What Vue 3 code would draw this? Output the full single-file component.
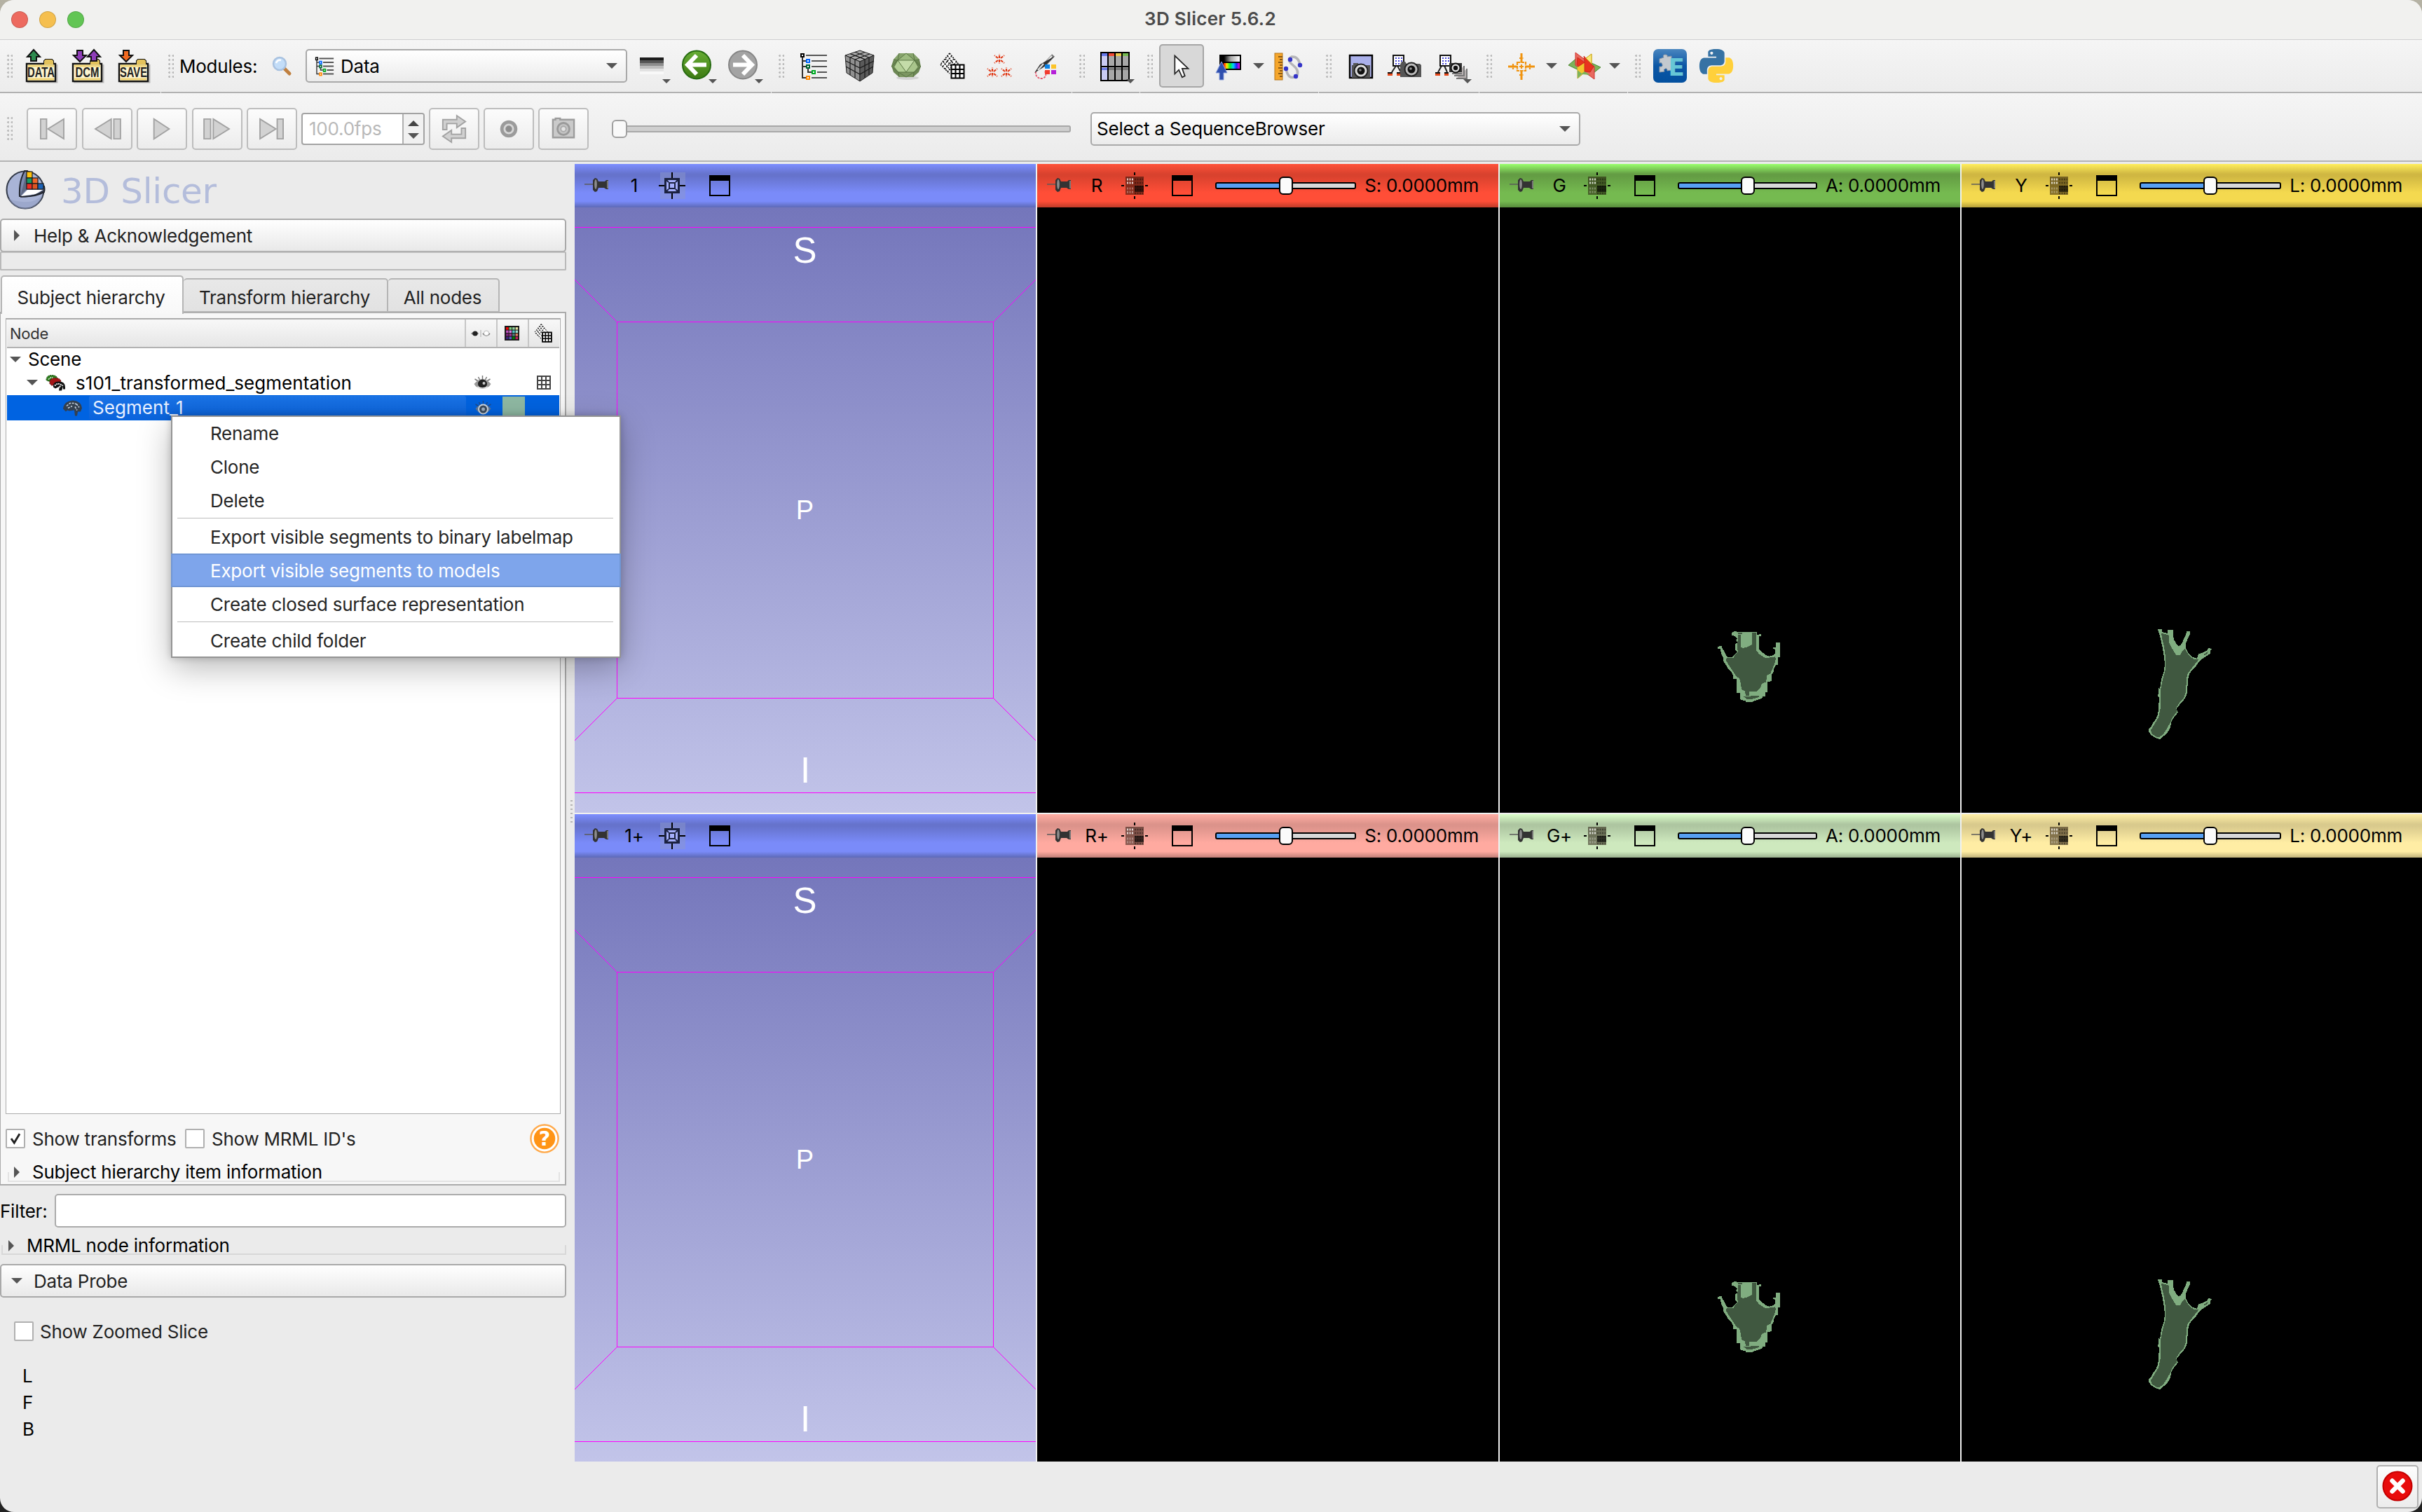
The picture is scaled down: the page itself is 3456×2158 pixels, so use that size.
<script setup>
const views = [
  { id: '1', kind: '3d', dy: 0, top: '#7d8eff', dark: '#6673cc', mid: '#7a8bf9', low: '#5d69b6' },
  { id: 'R', kind: 'slice', axis: 'S', top: '#ff5239', dark: '#d9422e', mid: '#ff4e37', low: '#bf3b29' },
  { id: 'G', kind: 'slice', axis: 'A', shape: 'g', top: '#9aff6d', dark: '#649d44', mid: '#75ba50', low: '#578b3c' },
  { id: 'Y', kind: 'slice', axis: 'L', shape: 'y', top: '#ffee5c', dark: '#d0b742', mid: '#f4d94f', low: '#b39e39' },
  { id: '1+', kind: '3d', dy: 2, top: '#7d8eff', dark: '#6673cc', mid: '#7a8bf9', low: '#5d69b6' },
  { id: 'R+', kind: 'slice', axis: 'S', top: '#ffaea4', dark: '#dc938b', mid: '#ffaaa0', low: '#c07f78' },
  { id: 'G+', kind: 'slice', axis: 'A', shape: 'g', top: '#dcffcb', dark: '#aec6a1', mid: '#cee9be', low: '#9ab08e' },
  { id: 'Y+', kind: 'slice', axis: 'L', shape: 'y', top: '#ffefa6', dark: '#d9ca8d', mid: '#ffeda4', low: '#c0b27a' }
]
const headStyle = (v) => ({
  background: `linear-gradient(to bottom, ${v.top} 0, ${v.dark} 23%, ${v.dark} 28%, ${v.mid} 66%, ${v.mid} 86%, ${v.low} 100%)`
})
const menu = [
  ['Rename', 'Clone', 'Delete'],
  ['Export visible segments to binary labelmap', 'Export visible segments to models', 'Create closed surface representation'],
  ['Create child folder']
]
const folders = [
  { t: 'DATA', len: 39, arrows: [{ x: 13, up: true, c: '#2e8b4f' }] },
  { t: 'DCM', len: 34, arrows: [{ x: 13, up: false, c: '#8e3db8' }, { x: 33, up: true, c: '#8e3db8' }] },
  { t: 'SAVE', len: 39, arrows: [{ x: 13, up: false, c: '#f26a21' }] }
]
const swatches = ['#f00', '#7ad27a', '#8fd0a0', '#e8e0a0', '#c050c0', '#d080e0', '#50c8c8', '#a0e0d0', '#802080', '#a03090', '#508080', '#e08060', '#402080', '#5060c0', '#008000', '#c02060']
const transport = ['first', 'prev', 'play', 'next', 'last']
</script>

<template>
  <div class="desktop">
    <div class="window">
      <header class="titlebar">
        <div class="lights"><i class="red"></i><i class="amber"></i><i class="green"></i></div>
        <div class="title">3D Slicer 5.6.2</div>
      </header>

      <div class="toolbar">
        <section style="width: 230px">
          <b class="grip"></b>
          <div v-for="f in folders" :key="f.t" class="cell">
            <svg viewBox="0 0 48 48" class="fold-ic">
              <path d="M4 47h42V22" fill="none" stroke="#999" stroke-width="3" opacity=".6" />
              <path d="M28 21v-4l2-2h9l2 2v4z" fill="#e3c25c" stroke="#111" stroke-width="2" />
              <rect x="3" y="21" width="41" height="25" fill="#fdf4cf" stroke="#111" stroke-width="2.400" />
              <path d="M5 24h37M5 43h37" stroke="#f0d477" stroke-width="3" />
              <path d="M28 21v-4l2-2h9l2 2v5H28z" fill="#e3c25c" />
              <text x="23.500" y="40" text-anchor="middle" :textLength="f.len" lengthAdjust="spacingAndGlyphs" class="ficon">{{ f.t }}</text>
              <g v-for="a in f.arrows" :key="a.x" :transform="`translate(${a.x} 0)`">
                <path :d="a.up ? 'M0 1l9 10h-5v6h-8v-6h-5z' : 'M0 18l9-9h-5V2h-8v7h-5z'" :fill="a.c" stroke="#111" stroke-width="2" />
              </g>
            </svg>
          </div>
        </section>

        <section style="width: 871px">
          <b class="grip"></b>
          <span class="modlabel">Modules:</span>
          <svg class="mag" viewBox="0 0 28 28">
            <path d="M17 17l8 8" stroke="#c08040" stroke-width="5" stroke-linecap="round" />
            <circle cx="11" cy="11" r="9" fill="#c3ddf8" stroke="#a9c2e0" stroke-width="2.500" />
            <path d="M6 10q2-5 7-4" stroke="#fff" stroke-width="2.500" fill="none" />
          </svg>
          <div class="combo modcombo">
            <svg class="hier-s" viewBox="4 4 40 42">
              <path d="M8 12v29h5M8 17h5M16 28v5h5M8 25h5" fill="none" stroke="#333" stroke-width="2" />
              <path d="M13 9h30M21 17h22M21 25h22M29 33h14M21 41h22" stroke="#555" stroke-width="3" />
              <rect x="6" y="7" width="4" height="5" fill="#fff" stroke="#000" stroke-width="2" />
              <rect x="14" y="15" width="4" height="5" fill="#fff" stroke="#06f" stroke-width="2.400" />
              <rect x="14" y="23" width="4" height="5" fill="#fff" stroke="#063" stroke-width="2.400" />
              <rect x="22" y="31" width="4" height="5" fill="#fff" stroke="#0a2" stroke-width="2.400" />
              <rect x="14" y="39" width="4" height="5" fill="#fff" stroke="#f80" stroke-width="2.400" />
            </svg>
            <span>Data</span>
            <i class="tri end"></i>
          </div>
          <div class="cell">
            <svg viewBox="0 0 48 48" shape-rendering="crispEdges">
              <rect x="9" y="12" width="34" height="4" fill="#1d1d1d" />
              <rect x="9" y="16" width="34" height="4" fill="#555" />
              <rect x="9" y="20" width="34" height="4" fill="#8d8d8d" />
              <rect x="9" y="24" width="34" height="4" fill="#bcbcbc" />
              <rect x="9" y="28" width="34" height="4" fill="#e2e2e2" />
              <rect x="9" y="32" width="34" height="4" fill="#f8f8f8" />
            </svg>
            <i class="tri mini"></i>
          </div>
          <div class="cell">
            <svg viewBox="0 0 48 48">
              <defs>
                <linearGradient id="gg" x1="0" y1="0" x2="0" y2="1"><stop offset="0" stop-color="#67ad35" /><stop offset="1" stop-color="#3d7a12" /></linearGradient>
              </defs>
              <circle cx="24" cy="22.500" r="20" fill="url(#gg)" stroke="#256a10" stroke-width="2" />
              <path d="M24 9L11 22.500 24 36M12 22.500h26" fill="none" stroke="#fff" stroke-width="6" />
            </svg>
            <i class="tri mini"></i>
          </div>
          <div class="cell">
            <svg viewBox="0 0 48 48">
              <circle cx="24" cy="22.500" r="20" fill="#a3a3a3" stroke="#858585" stroke-width="2" />
              <path d="M24 9l13 13.500L24 36M36 22.500H10" fill="none" stroke="#fff" stroke-width="6" />
            </svg>
            <i class="tri mini"></i>
          </div>
        </section>

        <section style="width: 429px">
          <b class="grip"></b>
          <div class="cell">
            <svg viewBox="0 0 48 48" shape-rendering="crispEdges">
              <path d="M8 12v29h5M8 17h5M16 28v5h5M8 25h5" fill="none" stroke="#333" stroke-width="1.500" />
              <path d="M13 9h30M21 17h22M21 25h22M29 33h14M21 41h22" stroke="#555" stroke-width="2" />
              <rect x="6" y="7" width="4" height="4" fill="#fff" stroke="#000" stroke-width="2" />
              <rect x="14" y="15" width="4" height="4" fill="#fff" stroke="#06f" stroke-width="2" />
              <rect x="14" y="23" width="4" height="4" fill="#fff" stroke="#063" stroke-width="2" />
              <rect x="22" y="31" width="4" height="4" fill="#fff" stroke="#0a2" stroke-width="2" />
              <rect x="14" y="39" width="4" height="4" fill="#fff" stroke="#f80" stroke-width="2" />
            </svg>
          </div>
          <div class="cell">
            <svg viewBox="0 0 48 48">
              <path d="M24 2l20 7-20 9L3 9z" fill="#a9a9a9" stroke="#222" />
              <path d="M3 9l21 9v28L5 34z" fill="#909090" stroke="#222" />
              <path d="M44 9l-20 9v28l18-12z" fill="#5a5a5a" stroke="#222" />
              <path d="M10 6.600l21 8M17 4.300l20 8M38 7L17 15M31 4.500L10 12M10 12v25M17 15v26M31 15v26M37 12v25M4 17l20 10 20-10M4 25l20 11 19-11" fill="none" stroke="#1a1a1a" stroke-width="1.200" />
            </svg>
          </div>
          <div class="cell">
            <svg viewBox="0 0 48 48">
              <ellipse cx="26" cy="41" rx="16" ry="3" fill="#d4d4d4" />
              <path d="M14 6h20l9 9 2 10-3 8-8 7H14l-8-7-3-9 3-9z" fill="#6c8754" />
              <path d="M14 6h20l9 9-7 1-12-10-12 10-6-1z" fill="#86a36b" />
              <path d="M24 6l12 10H12z" fill="#9dbb80" />
              <path d="M12 16h24l5 9-6 8H13l-6-8z" fill="#a9c58c" />
              <path d="M12 16h24L24 32z" fill="#c4dca9" />
              <path d="M12 16l12 16H13l-6-7z" fill="#b3cf96" />
              <path d="M13 33h22l-1 7H14z" fill="#7c9662" />
              <path d="M14 6L12 16 3 25l10 8 1 7M34 6l2 10 9 9-10 8-1 7M24 6L12 16h24L24 6M6 15l6 1M43 15l-7 1M12 16l12 17 12-17M13 33h22M13 33l11 7 11-7M7 25l5-9M41 25l-5-9" fill="none" stroke="#55703f" stroke-width=".9" />
            </svg>
          </div>
          <div class="cell">
            <svg viewBox="0 0 48 48">
              <path d="M20 6l13 16H22v12L7 22z" fill="#fff" />
              <path d="M20 6l13 16M17 10l9 12M14 14l8 10M11 18l10 12M7 22l13 13M20 6L7 22M23 10L10 25M26 14L13 29M30 18L17 32" stroke="#111" stroke-width="1.600" stroke-dasharray="2 1.500" fill="none" />
              <path d="M22.500 22.500h18v19h-18zM22 29h19M22 35h19" fill="#fff" stroke="#000" stroke-width="2" />
              <path d="M28.500 22v20M34.500 22v20" stroke="#000" stroke-width="2" />
            </svg>
          </div>
          <div class="cell">
            <svg viewBox="0 0 48 48" fill="none" stroke="#e03a17" stroke-width="2.200" stroke-dasharray="4 1.500">
              <g v-for="p in [[25, 14], [15, 33], [35, 33]]" :key="p[0]" :transform="`translate(${p[0]} ${p[1]})`">
                <path d="M0-1v-6M0 1v6M2-1l5-4M-2-1l-5-4M2 2l5 4M-2 2l-5 4" />
              </g>
            </svg>
          </div>
          <div class="cell">
            <svg viewBox="0 0 48 48">
              <path d="M11 32q-1 10 9 10 8-2 4-10" fill="none" stroke="#e8526a" stroke-width="1.800" stroke-dasharray="3 1.500" />
              <path d="M36 9L22 24" stroke="#777" stroke-width="5" />
              <path d="M34 10L21 24" stroke="#eee" stroke-width="2" />
              <path d="M38 10L22 26 9 34l8-12" fill="#333" />
              <path d="M22 21l-8 9" stroke="#ddd" stroke-width="2.500" />
              <rect x="24" y="22" width="7" height="6" fill="#0b82e6" /><rect x="33" y="22" width="7" height="6" fill="#fcc42a" />
              <rect x="24" y="30" width="7" height="6" fill="#f23b2f" /><rect x="33" y="30" width="7" height="6" fill="#b51fd8" />
            </svg>
          </div>
        </section>

        <section style="width: 97px">
          <b class="grip"></b>
          <div class="cell">
            <svg viewBox="0 0 48 48" shape-rendering="crispEdges">
              <rect x="4" y="4" width="42" height="42" fill="#a8a8a8" />
              <rect x="4" y="4" width="11" height="42" fill="#c9cbf2" />
              <path d="M6 8h8" stroke="#6678e8" stroke-width="4" /><path d="M16 8h8" stroke="#f04a35" stroke-width="4" />
              <path d="M26 8h8" stroke="#ecc94b" stroke-width="4" /><path d="M36 8h8" stroke="#74b950" stroke-width="4" />
              <path d="M6 28h8" stroke="#6678e8" stroke-width="3" /><path d="M16 28h28" stroke="#777" stroke-width="3" />
              <path d="M5 5h40v40H5zM15 4v42M25 4v42M35 4v42M4 25h42" fill="none" stroke="#000" stroke-width="2" />
            </svg>
            <i class="tri mini"></i>
          </div>
        </section>

        <section style="width: 255px">
          <b class="grip"></b>
          <div class="pressed">
            <svg viewBox="0 0 48 48">
              <path d="M16 9v27l6-6 5 11 4-2-4-11h9z" fill="#fff" stroke="#222" stroke-width="1.800" />
            </svg>
          </div>
          <div class="cell">
            <svg viewBox="0 0 48 48">
              <defs>
                <linearGradient id="gw"><stop offset=".2" stop-color="#000" /><stop offset=".55" stop-color="#aaa" /><stop offset="1" stop-color="#fff" /></linearGradient>
                <linearGradient id="gr"><stop offset="0" stop-color="#f00" /><stop offset=".2" stop-color="#fe0" /><stop offset=".4" stop-color="#0e3" /><stop offset=".6" stop-color="#0cf" /><stop offset=".8" stop-color="#22f" /><stop offset="1" stop-color="#f0c" /></linearGradient>
              </defs>
              <rect x="11" y="8" width="31" height="22" />
              <rect x="12" y="10" width="28" height="8" fill="url(#gw)" /><rect x="17" y="20" width="23" height="8" fill="url(#gr)" />
              <path d="M14 18l8 16h-5v10h-6V34H6z" fill="#2f4fae" stroke="#8ea2dc" />
            </svg>
          </div>
          <i class="tri drop"></i>
          <div class="cell">
            <svg viewBox="0 0 48 48">
              <rect x="4" y="6" width="11" height="38" fill="#f5a62c" stroke="#b5761a" />
              <path d="M9 11h6M11 15h4M9 19h6M11 23h4M9 27h6M11 31h4M9 35h6M11 39h4" stroke="#6b430c" stroke-width="1.600" />
              <path d="M40 23q-2-13-12-12-8 4 2 12 10 8 5 16-12 6-15-11" fill="none" stroke="#b5b5b9" stroke-width="3.500" />
              <circle cx="26" cy="15" r="3.200" fill="#3434c8" /><circle cx="40" cy="23" r="3.200" fill="#3434c8" />
              <circle cx="20" cy="28" r="3.200" fill="#3434c8" /><circle cx="34" cy="39" r="3.200" fill="#3434c8" />
            </svg>
          </div>
        </section>

        <section style="width: 229px">
          <b class="grip"></b>
          <div class="cell">
            <svg viewBox="0 0 48 48">
              <rect x="8" y="9" width="32" height="32" fill="#aab0ea" stroke="#000" stroke-width="2.400" />
              <path d="M13 20h7v3h17v18H11V23h2z" fill="#555" />
              <circle cx="24" cy="31" r="9.500" fill="#ddd" stroke="#222" stroke-width="2" /><circle cx="24" cy="31" r="5.500" fill="#111" /><circle cx="23" cy="30" r="1.800" fill="#888" />
            </svg>
          </div>
          <div class="cell">
            <svg viewBox="0 0 48 48">
              <path d="M8 24L2 33M10 24l5 9" stroke="#222" stroke-width="2" />
              <path d="M-4 34h7M9 34h7" stroke="#111" stroke-width="2" /><path d="M-4 36.500h7M9 36.500h7" stroke="#e3481b" stroke-width="3" />
              <rect x="4" y="9" width="15" height="15" fill="#fff" stroke="#111" stroke-width="2" />
              <path d="M7 13h2M11 13h2M15 13h2M7 17h2M11 17h2M15 17h2M7 21h2M11 21h2" stroke="#4747d8" stroke-width="2" />
              <path d="M16 18h5l2 3h19l2 2v17H14V22z" fill="#555" />
              <circle cx="30" cy="29" r="9.500" fill="#bbb" stroke="#222" stroke-width="2" /><circle cx="30" cy="29" r="5.500" fill="#111" /><circle cx="29" cy="28" r="1.800" fill="#999" />
            </svg>
          </div>
          <div class="cell">
            <svg viewBox="0 0 48 48">
              <path d="M7 24L2 33M11 24l4 9" stroke="#222" stroke-width="2" />
              <path d="M-2 34h7M11 34h6" stroke="#111" stroke-width="2" /><path d="M-2 36.500h7M11 36.500h6" stroke="#e3481b" stroke-width="3" />
              <path d="M28 42h15V28M25 38h14V24M22 35h14" stroke="#777" stroke-width="2" fill="#b9b2b2" />
              <rect x="5" y="9" width="15" height="15" fill="#fff" stroke="#111" stroke-width="2" />
              <path d="M8 13h2M12 13h2M16 13h2M8 17h2M12 17h2M16 17h2M8 21h2M12 21h2" stroke="#4747d8" stroke-width="2" />
              <rect x="18" y="20" width="18" height="13" fill="#333" />
              <circle cx="27" cy="27" r="6.500" fill="#ddd" stroke="#111" stroke-width="2" /><circle cx="27" cy="27" r="3.200" fill="#111" />
            </svg>
            <i class="tri mini m3"></i>
          </div>
        </section>

        <section style="width: 212px">
          <b class="grip"></b>
          <div class="cell">
            <svg viewBox="0 0 48 48" stroke="#f0930f" fill="none">
              <path d="M24 6v13M24 31v13M5 25h12M31 25h12" stroke-width="3" />
              <path d="M18 19h12v12H18zM21 13h6M21 37h6M12 21v8M36 21v8" stroke-width="2.200" stroke-dasharray="4.500 1" />
              <path d="M24 22v6M21 25h6" stroke-width="2.200" />
            </svg>
          </div>
          <i class="tri drop"></i>
          <div class="cell narrow">
            <svg viewBox="0 0 48 48">
              <path d="M1 23l14-12 32 15-15 12z" fill="#7db35a" stroke="#4e8a35" />
              <path d="M34 7L14 23v19l20-17z" fill="#f7ea7c" stroke="#cfa91e" />
              <path d="M11 5l27 20v18L11 23z" fill="#e86a5f" stroke="#d2302c" />
              <path d="M14 25l18 12-12-1-6 6z" fill="#7db35a" />
              <path d="M14 26l10-7v13l-4 3-6-5z" fill="#f2c62e" />
              <path d="M14 12l10 7-9 6-2-3zM23 10l14 15-5 8-8-1V18z" fill="#e8331f" stroke="#c42318" stroke-width=".8" />
              <path d="M26 13l8-6v14z" fill="#f7ea7c" stroke="#cfa91e" />
            </svg>
          </div>
          <i class="tri drop"></i>
        </section>

        <section class="rest">
          <b class="grip"></b>
          <div class="cell">
            <svg viewBox="0 0 48 48">
              <defs><linearGradient id="ge" x1="0" y1="0" x2="0" y2="1"><stop offset="0" stop-color="#4a86bf" /><stop offset=".5" stop-color="#0b56a5" /><stop offset="1" stop-color="#03509f" /></linearGradient></defs>
              <rect width="48" height="48" rx="7" fill="url(#ge)" />
              <path d="M9 14l6-2q-2-4 2-4t3 3l6-1v6q5-2 5 2t-5 3v9l-6 1q0-4-3-3t-1 4l-7 1v-8q5 1 4-3t-4-2z" fill="#c3c9cf" stroke="#8b97a5" />
              <text x="33" y="38" text-anchor="middle" class="ext-e">E</text>
            </svg>
          </div>
          <div class="cell">
            <svg viewBox="0 0 24 24">
              <path fill="#3672a4" d="M14.250.18l.9.2.73.26.59.3.45.32.34.34.25.34.16.33.1.3.04.26.02.2-.01.13V8.500l-.05.63-.13.55-.21.46-.26.38-.3.31-.33.25-.35.19-.35.14-.33.1-.3.07-.26.04-.21.02H8.770l-.69.05-.59.14-.5.22-.41.27-.33.32-.27.35-.2.36-.15.37-.1.35-.07.32-.04.27-.02.21v3.060H3.170l-.21-.03-.28-.07-.32-.12-.35-.18-.36-.26-.36-.36-.35-.46-.32-.59-.28-.73-.21-.88-.14-1.050-.05-1.230.06-1.220.16-1.040.24-.87.32-.71.36-.57.4-.44.42-.33.42-.24.4-.16.36-.1.32-.05.24-.01h.16l.06.01h8.160v-.83H6.180l-.01-2.750-.02-.37.05-.34.11-.31.17-.28.25-.26.31-.23.38-.2.44-.18.51-.15.58-.12.64-.1.71-.06.77-.04.84-.02 1.270.05zm-6.300 1.980l-.23.33-.08.41.08.41.23.34.33.22.41.09.41-.09.33-.22.23-.34.08-.41-.08-.41-.23-.33-.33-.22-.41-.09-.41.09z" />
              <path fill="#ffd03b" d="M21.040 6.110l.28.06.32.12.35.18.36.27.36.35.35.47.32.59.28.73.21.88.14 1.040.05 1.230-.06 1.230-.16 1.040-.24.86-.32.71-.36.57-.4.45-.42.33-.42.24-.4.16-.36.09-.32.05-.24.02-.16-.01h-8.220v.82h5.840l.01 2.760.02.36-.05.34-.11.31-.17.29-.25.25-.31.24-.38.2-.44.17-.51.15-.58.13-.64.09-.71.07-.77.04-.84.01-1.270-.04-1.070-.14-.9-.2-.73-.25-.59-.3-.45-.33-.34-.34-.25-.34-.16-.33-.1-.3-.04-.25-.02-.2.01-.13v-5.340l.05-.64.13-.54.21-.46.26-.38.3-.32.33-.24.35-.2.35-.14.33-.1.3-.06.26-.04.21-.02.13-.01h5.840l.69-.05.59-.14.5-.21.41-.28.33-.32.27-.35.2-.36.15-.36.1-.35.07-.32.04-.28.02-.21V6.070h2.090l.14.01zm-6.470 14.250l-.23.33-.08.41.08.41.23.33.33.23.41.08.41-.08.33-.23.23-.33.08-.41-.08-.41-.23-.33-.33-.23-.41-.08-.41.08z" />
            </svg>
          </div>
        </section>
      </div>

      <div class="seqbar">
        <b class="grip"></b>
        <div class="tbtns wide">
          <div v-for="t in transport" :key="t" class="tbtn">
            <svg viewBox="0 0 40 36" fill="#d2d2d2" stroke="#a2a2a2" stroke-width="2">
              <template v-if="t === 'first'"><path d="M3 3h9v30H3z" /><path d="M38 3v30L14 18z" /></template>
              <template v-if="t === 'prev'"><path d="M26 3v30L2 18z" /><path d="M30 3h10v30H30z" /></template>
              <path v-if="t === 'play'" d="M8 3l23 15L8 33z" />
              <template v-if="t === 'next'"><path d="M0 3h10v30H0z" /><path d="M14 3l24 15-24 15z" /></template>
              <template v-if="t === 'last'"><path d="M2 3l24 15L2 33z" /><path d="M28 3h9v30h-9z" /></template>
            </svg>
          </div>
        </div>
        <div class="spin"><span>100.0fps</span><div><i class="tri up"></i><i class="tri"></i></div></div>
        <div class="tbtns">
          <div class="tbtn">
            <svg class="big" viewBox="0 0 40 44" fill="#d0d0d0" stroke="#a2a2a2" stroke-width="2">
              <path d="M3 23V8h21V2l13 9-13 9v-6H9v9z" /><path d="M37 21v15H16v6L3 33l13-9v6h15v-9z" />
            </svg>
          </div>
          <div class="tbtn">
            <svg viewBox="0 0 40 36"><circle cx="20" cy="18" r="10.500" fill="#d6d6d6" stroke="#9b9b9b" stroke-width="5" /><circle cx="20" cy="18" r="5" fill="#8d8d8d" /></svg>
          </div>
          <div class="tbtn">
            <svg viewBox="0 0 40 36"><path d="M4 4h4V2h7v2h21v27H4z" fill="#cacaca" stroke="#9c9c9c" stroke-width="2.500" /><circle cx="20" cy="18" r="9" fill="#c4c4c4" stroke="#9a9a9a" stroke-width="3" /><circle cx="20" cy="18" r="4" fill="#e4e4e4" stroke="#aaa" stroke-width="2" /></svg>
          </div>
        </div>
        <div class="seqslider"><i></i></div>
        <div class="combo seqcombo"><span>Select a SequenceBrowser</span><i class="tri end"></i></div>
      </div>

      <main class="body">
        <aside class="panel">
          <div class="brand">
            <svg viewBox="0 0 56 56">
              <circle cx="28" cy="28" r="26.500" fill="#a9b4d6" stroke="#333a48" stroke-width="2" />
              <path d="M4 40a26 26 0 0 0 49-5q-10 12-30 10-13-1-19-5z" fill="#8f9bc2" opacity=".5" />
              <path d="M27 1q-8 14-7 36 20 2 35-6 1-4 0-8L36 26 31 1z" fill="#7c88ad" stroke="#22262f" stroke-width="2" />
              <path d="M30 3v24l-9 10 9-34z" fill="#5f6983" />
              <path d="M31 28h22l-10 6-21 3z" fill="#fff" />
              <path d="M21 38q19 1 35-10" fill="none" stroke="#22262f" stroke-width="1.500" />
              <g stroke="#1c1c1c" stroke-width="1.200">
                <rect x="30" y="2" width="8" height="9" fill="#ffc20e" /><rect x="30" y="11" width="8" height="8" fill="#179a64" /><rect x="38" y="11" width="8" height="8" fill="#f0672a" />
                <rect x="30" y="19" width="8" height="8" fill="#ee2e24" /><rect x="38" y="19" width="8" height="8" fill="#dd5523" /><rect x="46" y="19" width="8" height="8" fill="#1b63b8" />
              </g>
            </svg>
            <span>3D Slicer</span>
          </div>
          <div class="bar"><i class="tri right"></i><span>Help &amp; Acknowledgement</span></div>
          <div class="thin"></div>
          <div class="tabs">
            <div class="tab on">Subject hierarchy</div>
            <div class="tab t2">Transform hierarchy</div>
            <div class="tab t3">All nodes</div>
          </div>
          <div class="pane">
            <div class="tree">
              <div class="thead">
                <span class="c0">Node</span>
                <span class="c1">
                  <svg viewBox="0 0 28 12" width="28" height="12"><path d="M0 6q6-6 11 0-5 6-11 0z" fill="#777" /><circle cx="6" cy="6" r="3.500" fill="#222" /><path d="M14 1v10" stroke="#aaa" /><path d="M17 6q5 6 10 0" fill="none" stroke="#666" stroke-width="1.500" /><circle cx="22" cy="5.500" r="3.500" fill="#fff" stroke="#bbb" /></svg>
                </span>
                <span class="c1">
                  <svg viewBox="0 0 20 20" width="21" height="21"><rect width="20" height="20" fill="#1a1a1a" /><rect v-for="(s, i) in swatches" :key="i" :x="2 + (i % 4) * 4.300" :y="2 + Math.floor(i / 4) * 4.300" width="3.300" height="3.300" :fill="s" /></svg>
                </span>
                <span class="c1">
                  <svg viewBox="6 5 37 38" width="27" height="27"><path d="M20 6l13 16H22v12L7 22z" fill="#fff" /><path d="M20 6L7 22l13 13M20 6l13 16M23 10L10 25M26 14L13 29M17 10l9 12M14 14l8 10M11 18l10 12" stroke="#222" stroke-width="1.500" stroke-dasharray="2.500 2" fill="none" /><path d="M22.500 22.500h18v19h-18z" fill="#fff" stroke="#000" stroke-width="2.600" /><path d="M22 29h19M22 35h19M28.500 22v20M34.500 22v20" stroke="#000" stroke-width="2.200" /></svg>
                </span>
              </div>
              <div class="row r1"><i class="tri"></i><span>Scene</span></div>
              <div class="row r2">
                <i class="tri"></i>
                <svg class="ni" viewBox="0 0 30 24">
                  <path d="M1 8q0-7 8-7 8 0 8 6l-5 4-3-3-4 2z" fill="#2e7d1e" stroke="#1b4d10" stroke-dasharray="2 1" />
                  <path d="M4 7l4-3 5 2" stroke="#fff" fill="none" stroke-dasharray="2 1" stroke-width="1.200" />
                  <path d="M6 13q-1-8 8-8 9 0 8 8l-5 4-4-3-4 2z" fill="#a31515" stroke="#5a0a0a" stroke-dasharray="2 1" />
                  <path d="M11 18q-1-8 8-8 9 0 9 8v3h-3v-4l-2 6h-4l1-6-6 3z" fill="#111" /><path d="M13 16l4-3 4 1 4 2M20 18l2-3" stroke="#fff" fill="none" stroke-dasharray="2 1" stroke-width="1.800" />
                </svg>
                <span class="nm">s101_transformed_segmentation</span>
                <svg class="eye" viewBox="0 0 24 20"><path d="M12 0v5M6 2l2 4M18 2l-2 4M1 5l5 3M23 5l-5 3" stroke="#777" stroke-width="1.500" /><path d="M0 12q12-14 24 0-3 6-12 7-9-1-12-7z" fill="#999" /><circle cx="12" cy="12" r="6.500" fill="#222" /><circle cx="14" cy="11" r="2" fill="#ccc" /><path d="M5 16q7 4 14 0" stroke="#eee" fill="none" stroke-width="1.500" /></svg>
                <svg class="gridi" viewBox="0 0 20 20"><path d="M1 1h18v18H1zM7 1v18M13 1v18M1 7h18M1 13h18" fill="#fff" stroke="#444" stroke-width="2" /></svg>
              </div>
              <div class="row r3">
                <svg class="ni" viewBox="0 0 30 24"><path d="M1 13Q2 2 15 1q12 1 13 11l-2 5h-4l-1 6h-3l-1-8-7 1-3-1-2 2z" fill="#33404f" /><path d="M6 9l5-4h6l4 2M8 12l6-3M18 10l3 5M20 6l4 5" stroke="#c7d2de" stroke-width="1.600" fill="none" stroke-dasharray="3 1.500" /></svg>
                <div class="selname">Segment_1</div>
                <svg class="eye" viewBox="0 0 24 20"><path d="M12 0v5M6 2l2 4M18 2l-2 4M1 5l5 3M23 5l-5 3" stroke="#1d4d8f" stroke-width="1.500" /><path d="M1 11q11-12 22 0-3 6-11 8-8-2-11-8z" fill="#5e7898" /><circle cx="12" cy="12" r="6.500" fill="#3a4a5c" stroke="#cfd8e2" stroke-width="2" /><circle cx="12" cy="12" r="2.500" fill="#9fb0c2" /></svg>
                <i class="swatch"></i>
              </div>
            </div>
            <div class="opts">
              <i class="cb"><svg viewBox="0 0 28 28"><path d="M7 14l5 7L21 6" fill="none" stroke="#222" stroke-width="3.400" /></svg></i><span class="o1">Show transforms</span>
              <i class="cb second"></i><span>Show MRML ID's</span>
              <svg class="help" viewBox="0 0 44 44"><circle cx="22" cy="22" r="20.500" fill="#fff" stroke="#ffa94a" stroke-width="2.500" /><circle cx="22" cy="22" r="16" fill="#ff9416" /><text x="22" y="32" text-anchor="middle" class="qm">?</text></svg>
            </div>
            <div class="fold f1"><i class="tri right"></i><span>Subject hierarchy item information</span></div>
          </div>
          <div class="filter"><span>Filter:</span><div></div></div>
          <div class="fold f2"><i class="tri right"></i><span>MRML node information</span></div>
          <div class="bar probe"><i class="tri"></i><span>Data Probe</span></div>
          <div class="zoomed"><i class="cb"></i><span>Show Zoomed Slice</span></div>
          <div class="lfb"><span>L</span><span>F</span><span>B</span></div>
        </aside>
        <div class="splitter"><b></b></div>

        <div class="views">
          <div v-for="v in views" :key="v.id" class="view">
            <div class="vhead" :style="headStyle(v)">
              <svg class="pin" viewBox="0 0 36 24">
                <path d="M0 11h12" stroke="#5a5a5a" stroke-width="1.500" />
                <path d="M12 5l3-3 3 1 2 4 9 0 2-2h3v13h-3l-3-2h-8l-2 5-3 1-3-3z" fill="#333" />
                <ellipse cx="16" cy="11" rx="1.800" ry="7" fill="#8d8d8d" /><path d="M33 6v11" stroke="#777" stroke-width="2" />
              </svg>
              <span class="vid">{{ v.id }}</span>
              <svg v-if="v.kind === '3d'" class="ctr" viewBox="0 0 38 38">
                <rect x="2" width="36" height="38" fill="#8f98c8" opacity=".45" />
                <path d="M19 0v9M19 29v9M0 19h9M28 19h10" stroke="#000" stroke-width="2" />
                <rect x="9.500" y="9.500" width="19" height="19" fill="#a6b0fb" stroke="#1b2240" stroke-width="3" />
                <rect x="15" y="15" width="8" height="8" fill="#a6b0fb" stroke="#1b2240" stroke-width="2" />
                <path d="M11 11l3 3M27 11l-3 3M11 27l3-3M27 27l-3-3" stroke="#1b2240" stroke-width="2" />
              </svg>
              <svg v-else class="ctr" viewBox="0 0 38 38">
                <path d="M19 0v4M19 34v4M0 19h4M34 19h4" stroke="#000" stroke-width="2" />
                <rect x="6" y="6" width="26" height="26" fill="#1a0a00" opacity=".5" />
                <path d="M8 10h10M8 15h10" stroke="#fff" stroke-width="3" stroke-dasharray="2 1.500" opacity=".75" />
                <path d="M8 23h10M8 28h10" stroke="#fff" stroke-width="3" stroke-dasharray="2 1.500" opacity=".3" />
                <rect x="19" y="19" width="13" height="9" fill="#000" opacity=".6" />
                <path d="M19 10h12M19 15h12M19 20h12M19 25h12M19 30h12" stroke="#000" stroke-width="2.500" stroke-dasharray="2 1.500" opacity=".4" />
              </svg>
              <svg class="win" viewBox="0 0 30 30"><path d="M1 1h28v28H1z" fill="none" stroke="#000" stroke-width="2" /><path d="M0 0h30v8H0z" /></svg>
              <template v-if="v.kind === 'slice'">
                <div class="sl"><i></i></div>
                <span class="off">{{ v.axis }}: 0.0000mm</span>
              </template>
            </div>
            <div v-if="v.kind === '3d'" class="scene">
              <svg width="658" height="862" viewBox="0 0 658 862">
                <g fill="none" stroke="#f0f" shape-rendering="crispEdges">
                  <path :d="`M0 28.500h658M0 ${835.5 - v.dy}h658`" />
                  <path :d="`M60.500 163.500h537v${537 - v.dy}h-537z`" />
                  <path :d="`M0 103l60.500 60.500M658 103l-60.500 60.500M60.500 ${700.5 - v.dy}l-60.500 60.500M597.500 ${700.5 - v.dy}l60.500 60.500`" />
                </g>
                <g fill="#fff" text-anchor="middle" class="axes">
                  <text x="328.500" y="79" font-size="51">S</text>
                  <text x="328.500" :y="445 - v.dy / 2" font-size="38">P</text>
                  <text x="329" :y="821 - v.dy" font-size="51">I</text>
                </g>
              </svg>
            </div>
            <div v-else class="slice">
              <svg v-if="v.shape === 'g'" class="sg" viewBox="0 0 390 420" shape-rendering="crispEdges">
                <path fill="#80ad80" d="M124 69L133 63H144V66H231V78H240V75H249V84H240V141L249 150 258 156 267 165 282 170 303 165 309 156V141L299 135V132H312V111H330V174H321V207H312L303 225V234L294 250V276L276 280V324H267V342H255V348L237 356 216 362 213 366H183V360H174L160 354V342L160 327H145V268L129 266V252L120 234 111 228 96 204 87 190V177L78 160 75 138 63 137V130L72 126H82V133L90 148 99 165 105 174H126L132 165 141 156 147 150 138 142V118L148 112 141 100 146 94 138 84 124 80z" />
                <path fill="#405840" d="M150 78H162V132L171 135 192 130 210 120V70H228V144L240 160 258 172 268 178 282 176 309 172 312 182 306 204 297 225 288 245 274 252 270 280 252 288 246 306 230 322H198V339H183L180 320 165 312 162 288 156 264 144 258 132 240 120 222 108 204 98 186 102 178 132 176 138 162 150 150 147 136V118L148 110 150 96z" />
                <path fill="#405840" d="M165 342L240 339V345L222 350 210 354H186L180 345zM150 70H168V76H152z" />
              </svg>
              <svg v-if="v.shape === 'y'" class="sy" viewBox="0 0 390 570" shape-rendering="crispEdges">
                <path fill="#80ad80" d="M87 54H105V66L128 72V57H153V78L156 99 168 118 174 126 183 124 192 112 198 96 208 76 210 63H225V75L216 93 208 112V136L218 156 237 174 255 180 261 160 282 154 300 144 303 135 318 138 312 146V158L294 170 279 180 264 192 252 210 234 228 222 246 216 270 213 327 204 350 190 366 170 390 166 396 174 410 162 424 150 440 144 455 141 476 126 500 112 512 96 526 78 520 57 506 48 492V480L60 470 66 456 78 440 87 420 90 396 93 345 88 342 90 306 96 312 102 270 114 232 117 200 112 160 106 126 96 84 90 64z" />
                <path fill="#405840" d="M102 72L114 74 135 80V112L144 130 165 164H183L195 144 204 136 210 150 222 168 240 182 262 184 246 204 232 222 216 242 210 262 207 324 198 348 183 364 166 390 168 410 150 430 140 455 126 480 110 505 93 516 78 514 60 500 57 486 72 462 90 432 99 390 98 320 108 270 120 225 121 180 114 130 106 96zM285 160L304 150 298 160 286 166z" />
              </svg>
            </div>
          </div>
        </div>
      </main>

      <footer class="status">
        <div class="errbtn">
          <svg viewBox="0 0 44 44"><circle cx="22" cy="22" r="20.500" fill="#e80c0c" stroke="#c40000" stroke-width="2" /><path d="M14.500 14.500l15 15M29.500 14.500l-15 15" stroke="#fff" stroke-width="6.500" stroke-linecap="round" /></svg>
        </div>
      </footer>

      <div class="ctx">
        <div v-for="(g, gi) in menu" :key="gi" class="grp">
          <div v-for="(m, mi) in g" :key="m" class="mi" :class="{ hot: gi === 1 && mi === 1 }">{{ m }}</div>
        </div>
      </div>
    </div>
  </div>
</template>

<style>
html, body { margin: 0; }
</style>

<style scoped>
* { box-sizing: border-box; }
.desktop { width: 3456px; height: 2158px; overflow: hidden; background: linear-gradient(#b5b2a4, #222 50%); font-family: Inter, "Noto Sans", sans-serif; font-size: 26px; letter-spacing: -0.230px; color: #000; }
.window { position: relative; width: 3456px; height: 2158px; background: #ebebeb; border-radius: 20px; overflow: hidden; display: flex; flex-direction: column; white-space: nowrap; }
svg { display: block; overflow: visible; flex: none; }
i { font-style: normal; display: block; flex: none; }

.titlebar { height: 57px; flex: none; background: #f1f1ef; border-bottom: 1px solid #cfcfcf; display: flex; align-items: center; justify-content: center; position: relative; }
.lights { position: absolute; left: 16px; top: 16px; display: flex; gap: 16px; }
.lights i { width: 24px; height: 24px; border-radius: 50%; border: 1px solid rgba(0, 0, 0, .15); }
.red { background: #ed6a5f; } .amber { background: #f5bf4f; } .green { background: #62c554; }
.title { font-weight: 600; color: #4b4b4b; font-size: 26px; letter-spacing: .3px; margin-top: -3px; margin-right: 2px; }

.toolbar { height: 76px; flex: none; display: flex; background: linear-gradient(#f5f5f5, #ececec); }
.toolbar section { height: 76px; flex: none; display: flex; align-items: center; padding-left: 10px; border-bottom: 2px solid #b1b1b1; position: relative; }
.toolbar section + section::before { content: ""; position: absolute; left: -1px; bottom: -2px; width: 1px; height: 2px; background: #eee; }
.toolbar .rest { flex: 1; }
.grip { flex: none; width: 8px; height: 33px; margin-right: 9px; background: radial-gradient(circle at 1.500px 1.500px, #b9b9b9 1.300px, transparent 1.500px) 0 0 / 5.500px 6px; }
.cell { width: 66px; height: 74px; flex: none; display: flex; align-items: center; justify-content: center; position: relative; }
.cell svg { width: 48px; height: 48px; }
.cell .fold-ic { margin-left: -3px; }
.cell.narrow { margin-left: 4px; }
.ficon { font: 700 20px "Liberation Sans", sans-serif; fill: #222; letter-spacing: 0; }
.ext-e { font: 700 34px "DejaVu Sans", sans-serif; fill: #66c6d6; }
.tri { width: 0; height: 0; border-left: 8px solid transparent; border-right: 8px solid transparent; border-top: 8px solid #555; }
.tri.right { border-top: 8px solid transparent; border-bottom: 8px solid transparent; border-left: 8px solid #555; border-right: 0; }
.tri.up { border-top: 0; border-bottom: 8px solid #444; }
.tri.mini { position: absolute; left: 50px; top: 56px; border-width: 6px 6px 0; }
.tri.m3 { left: 47px; }
.tri.drop { margin: 0 2px; }
.tri.end { margin-left: auto; }
.modlabel { width: 131px; margin-left: -1px; margin-right: 1px; }
.mag { width: 28px; height: 28px; margin-right: 20px; margin-top: -1px; }
.combo { border: 2px solid #a9a9a9; border-radius: 5px; background: linear-gradient(#fff, #ebebeb); display: flex; align-items: center; flex: none; }
.modcombo { width: 459px; height: 48px; padding: 0 12px 0 11px; }
.hier-s { width: 28px; height: 29px; margin-right: 9px; }
.pressed { width: 64px; height: 62px; margin-right: 2px; background: #d8d8d8; border: 2px solid #a6a6a6; border-radius: 5px; display: flex; align-items: center; justify-content: center; }
.pressed svg { width: 46px; height: 46px; margin-left: -4px; }

.seqbar { height: 98px; flex: none; background: linear-gradient(#f5f5f5, #ebebeb); border-bottom: 2px solid #b4b4b4; display: flex; align-items: center; padding-left: 10px; padding-top: 5px; }
.seqbar .grip { margin-right: 20px; }
.tbtns { display: flex; gap: 6px; flex: none; }
.tbtns.wide { gap: 6.500px; }
.tbtn { width: 72px; height: 60px; border: 2px solid #bdbdbd; border-radius: 5px; background: linear-gradient(#fcfcfc, #ececec); display: flex; align-items: center; justify-content: center; }
.tbtn svg { width: 38px; height: 34px; }
.tbtn svg.big { height: 42px; }
.spin { width: 176px; height: 46px; margin: 0 6px; border: 2px solid #a3a3a3; border-radius: 4px; background: #fff; display: flex; align-items: center; color: #b9b9b9; padding-left: 9px; flex: none; }
.spin span { flex: 1; }
.spin div { width: 30px; height: 42px; border-left: 2px solid #b0b0b0; background: #f1f1f1; display: flex; flex-direction: column; align-items: center; justify-content: space-between; padding: 9px 0 7px; border-radius: 0 4px 4px 0; }
.seqslider { width: 655px; height: 10px; margin-left: 33px; border: 2px solid #a8a8a8; border-radius: 3px; background: #cfcfcf; display: flex; align-items: center; flex: none; }
.seqslider i { width: 22px; height: 26px; margin-left: -2px; background: #f9f9f9; border: 2px solid #a0a0a0; border-radius: 6px; }
.seqcombo { width: 699px; height: 48px; margin-left: 28px; padding: 0 12px 0 7px; }

.body { height: 1855px; flex: none; display: flex; }
.panel { width: 808px; flex: none; display: flex; flex-direction: column; padding-top: 12px; }
.brand { height: 56px; display: flex; align-items: center; padding-left: 8px; flex: none; }
.brand svg { width: 56px; height: 56px; }
.brand span { font: 50px "DejaVu Sans", sans-serif; letter-spacing: -.3px; color: #b4bddb; margin: 3px 0 0 23px; }
.bar { height: 48px; flex: none; margin-top: 13px; border: 2px solid #a9a9a9; border-radius: 5px; background: linear-gradient(#fff, #e9e9e9); display: flex; align-items: center; color: #222; padding-left: 18px; }
.bar span { margin-left: 20px; }
.thin { height: 27px; flex: none; border: 2px solid #b9b9b9; border-top-color: #bdbdbd; border-radius: 2px; margin-top: -1px; }
.tabs { display: flex; align-items: flex-end; height: 53px; flex: none; margin-top: 7px; padding-left: 1px; color: #222; position: relative; z-index: 1; }
.tab { height: 49px; border: 2px solid #b5b5b5; border-radius: 5px 5px 0 0; background: linear-gradient(#e8e8e8, #e2e2e2); display: flex; align-items: center; justify-content: center; padding: 5px 2px 0 0; }
.tab.on { width: 261px; height: 55px; margin-bottom: -2px; background: linear-gradient(#fff, #f8f8f8); border-bottom: 0; padding-right: 3px; }
.tab.t2 { width: 292px; border-left: 0; } .tab.t3 { width: 159px; border-left: 0; }
.pane { height: 1247px; flex: none; margin-top: -1px; border: 2px solid #ababab; border-left-width: 1px; background: #f7f7f7; padding: 7px 6px 0 7px; display: flex; flex-direction: column; }
.tree { width: 792px; height: 1136px; flex: none; background: #fff; border: 1px solid #ababab; border-top-width: 2px; }
.thead { height: 41px; display: flex; border-bottom: 2px solid #b2b2b2; background: linear-gradient(#f8f8f8, #e6e6e6); font-size: 22px; color: #333; margin: 0 1px; }
.thead .c0 { width: 654px; padding-left: 4px; line-height: 41px; }
.thead .c1 { width: 45px; border-left: 2px solid #c6c6c6; display: flex; align-items: center; justify-content: center; padding-right: 2px; }
.row { display: flex; align-items: center; position: relative; }
.r1 { height: 31px; margin-top: 0; padding-left: 5px; } .r1 span { margin-left: 10px; }
.r2 { height: 36px; padding-left: 29px; } .r2 .ni { margin-left: 11px; } .r2 .nm { width: 568px; margin-left: 13px; letter-spacing: .05px; }
.ni { width: 30px; height: 25px; }
.eye { width: 25px; height: 20px; }
.gridi { width: 20px; height: 20px; margin-left: 65px; }
.r3 { height: 36px; margin: 0 1px; background: #0063e1; padding-left: 79px; color: #e8f0ff; }
.selname { width: 538px; height: 34px; margin-left: 8px; padding-left: 5px; line-height: 34px; background: linear-gradient(#1a73e6, #0a63dc); border-radius: 3px; letter-spacing: .05px; }
.r3 .eye { margin-left: 12px; } .swatch { width: 32px; height: 33px; margin-left: 15px; background: #8fb9a3; }
.opts { display: flex; align-items: center; height: 42px; margin-top: 14px; color: #222; flex: none; }
.opts .o1 { width: 206px; }
.cb { width: 28px; height: 28px; border: 2px solid #b0b0b0; background: #fff; border-radius: 2px; margin-right: 10px; }
.cb svg { width: 24px; height: 24px; }
.cb.second { margin-left: 12px; }
.help { width: 42px; height: 42px; margin-left: auto; margin-right: 2px; }
.qm { font: 700 30px "DejaVu Sans", sans-serif; fill: #fff; }
.fold { display: flex; align-items: center; position: relative; flex: none; }
.fold::after { content: ""; position: absolute; left: 0; right: 0; bottom: 0; height: 12px; border: 2px solid rgba(0, 0, 0, .08); border-top: 0; }
.f1 { height: 32px; margin: 9px 1px 0 3px; padding: 3px 0 0 9px; } .f1 span { margin-left: 18px; }
.filter { display: flex; height: 48px; margin-top: 12px; align-items: center; flex: none; }
.filter span { width: 78px; } .filter div { flex: 1; height: 48px; border: 2px solid #ababab; border-radius: 5px; background: #fff; }
.f2 { height: 32px; margin: 7px 0 0 2px; padding: 5px 0 0 10px; } .f2 span { margin-left: 18px; }
.bar.probe { margin-top: 13px; padding-left: 14px; } .probe span { margin-left: 16px; }
.zoomed { display: flex; align-items: center; margin: 34px 0 0 20px; height: 28px; color: #222; flex: none; } .zoomed .cb { margin-right: 9px; }
.lfb { display: flex; flex-direction: column; margin: 31px 0 0 32px; } .lfb span { height: 38px; line-height: 38px; }
.splitter { width: 12px; flex: none; display: flex; align-items: center; justify-content: flex-end; }
.splitter b { width: 3px; height: 33px; margin-right: 3px; background: repeating-linear-gradient(#b5b5b5 0 2px, transparent 2px 6px); }

.views { margin-top: 3px; width: 2636px; height: 1852px; display: grid; grid-template-columns: 658px 658px 657px 657px; grid-template-rows: 926px 924px; gap: 2px; background: #f0f0f0; }
.view { display: flex; flex-direction: column; overflow: hidden; background: #000; }
.vhead { height: 62px; flex: none; display: flex; align-items: center; padding-left: 14px; padding-right: 28px; }
.pin { width: 36px; height: 24px; margin-top: -2px; }
.vid { width: 70px; text-align: center; margin-top: -1px; }
.ctr { width: 38px; height: 38px; }
.win { width: 30px; height: 30px; margin-left: 34px; }
.sl { flex: 1; height: 10px; margin: 0 12px 0 32px; border: 2px solid #000; border-radius: 3px; background: linear-gradient(to right, #57a0f3 50%, #d8d8d8 50%); display: flex; align-items: center; justify-content: center; }
.sl i { width: 20px; height: 26px; background: #fbfbfb; border: 2px solid #000; border-radius: 6px; }
.off { margin-top: -2px; }
.scene { flex: 1; background: linear-gradient(#7476bb, #c2c4e9); }
.axes { font-family: "Liberation Sans", sans-serif; letter-spacing: 0; }
.slice { flex: 1; position: relative; background: #000; }
.sg { position: absolute; left: 290px; top: 584px; width: 130px; height: 140px; }
.sy { position: absolute; left: 251px; top: 584px; width: 130px; height: 190px; }

.status { flex: 1; display: flex; justify-content: flex-end; align-items: flex-start; padding: 5px 5px 0 0; }
.errbtn { width: 60px; height: 62px; border: 2px solid #b0b0b0; border-radius: 5px; background: linear-gradient(#fdfdfd, #ececec); display: flex; align-items: center; justify-content: center; }
.errbtn svg { width: 44px; height: 44px; margin-top: -2px; }

.ctx { position: absolute; left: 244px; top: 593px; width: 642px; height: 346px; background: #fff; border: 2px solid #949494; box-shadow: 0 14px 44px rgba(0, 0, 0, .28), 0 0 10px rgba(0, 0, 0, .2); color: #252525; z-index: 5; }
.grp + .grp { padding-top: 4px; position: relative; }
.grp + .grp::before { content: ""; position: absolute; left: 7px; right: 9px; top: 0; height: 1px; background: #bdbdbd; }
.mi { height: 48px; line-height: 50px; margin: 0 -2px; padding-left: 56px; position: relative; top: -1px; }
.mi.hot { background: #7ea5eb; border: 2px solid #7096d4; line-height: 46px; color: #fff; padding-left: 54px; }
</style>
